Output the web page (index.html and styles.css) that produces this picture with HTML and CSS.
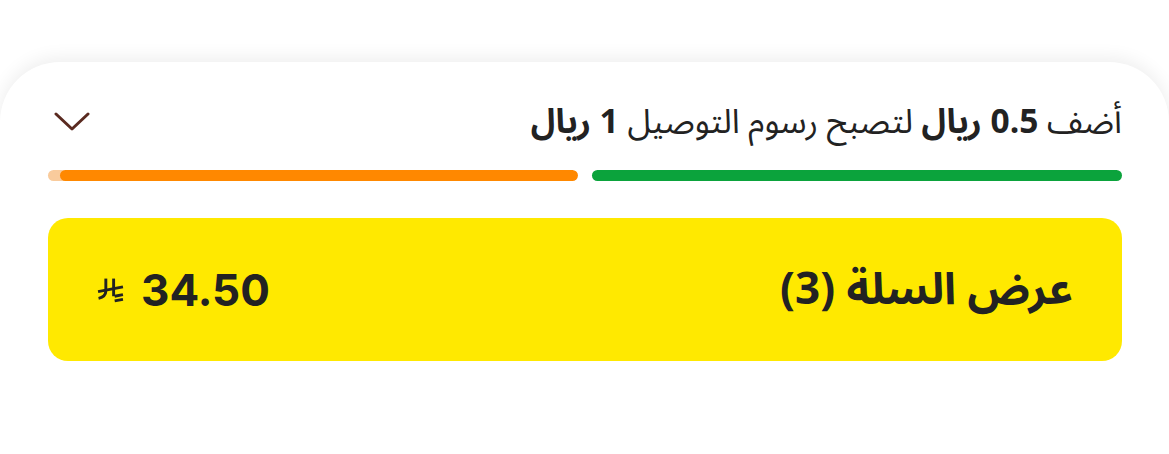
FILE: index.html
```html
<!DOCTYPE html>
<html lang="ar" dir="rtl">
<head>
  <meta charset="UTF-8" />
  <meta name="viewport" content="width=device-width, initial-scale=1.0"/>
  <title>السلة</title>
  <link rel="stylesheet" href="styles.css">
</head>
<body>
  <div class="cart-sheet">
    <!-- delivery fee hint -->
    <div class="fee-row">
      <p class="fee-text">أضف <b>0.5 ريال</b> لتصبح رسوم التوصيل <b>1 ريال</b></p>
      <button class="toggle-btn" title="إخفاء">
        <svg width="36" height="20" viewBox="0 0 36 20">
          <path d="M2 2 L18 17 L34 2" fill="none" stroke="#5a2a20" stroke-width="3" stroke-linecap="round" stroke-linejoin="round"/>
        </svg>
      </button>
    </div>

    <div class="progress">
      <div class="bar bar-done"></div>
      <div class="bar bar-current">
        <div class="bar-fill" style="width: 97.7%"></div>
      </div>
    </div>

    <!-- view cart -->
    <button class="cart-btn">
      <span class="cart-label">عرض السلة (3)</span>
      <span class="cart-price">
        <span class="price-num">34.50</span>
        <svg class="riyal" width="27" height="26" viewBox="0 0 26 24">
          <g fill="none" stroke="#222" stroke-width="2.8" stroke-linecap="butt">
            <path d="M8.5 1 V13"/>
            <path d="M16 1 V18"/>
            <path d="M8.5 13 C8.5 17 6 19 1.5 20"/>
            <path d="M1 13.5 L25 9"/>
            <path d="M17 18 L25 16.5"/>
            <path d="M17 22.5 L25 21"/>
          </g>
        </svg>
      </span>
    </button>
  </div>
</body>
</html>
```

FILE: styles.css
```css
/* ===== Base ===== */
* {
  margin: 0;
  padding: 0;
  box-sizing: border-box;
}
html, body {
  height: 100%;
  background: #fff;
  font-family: 'Noto Sans Arabic', 'DejaVu Sans', 'Noto Sans', sans-serif;
  color: #222;
}
body {
  padding-top: 62px;
  overflow: hidden;
}

/* ===== Sheet ===== */
.cart-sheet {
  height: 100%;
  background: #fff;
  border-radius: 60px 60px 0 0;
  box-shadow: 0 -4px 18px rgba(0,0,0,0.07);
  padding: 32px 47px 0 48px;
}
.fee-row {
  display: flex;
  justify-content: space-between;
  align-items: center;
  height: 56px;
}
.fee-text {
  font-size: 33.5px;
  font-weight: 400;
  white-space: nowrap;
}
.fee-text b {
  font-weight: 700;
}
.toggle-btn {
  background: none;
  border: none;
  margin-left: 6px;
  display: flex;
}

/* ===== Progress ===== */
.progress {
  display: flex;
  gap: 14px;
  margin-top: 20px;
}
.bar {
  flex: 1;
  height: 11px;
  border-radius: 6px;
  overflow: hidden;
}
.bar-done {
  background: #0ba33c;
}
.bar-current {
  background: #f9cb9c;
}
.bar-fill {
  height: 100%;
  background: #ff8800;
  border-radius: 6px;
}

/* ===== Cart button ===== */
.cart-btn {
  width: 100%;
  height: 143px;
  margin-top: 37px;
  background: #ffe900;
  border: none;
  border-radius: 20px;
  display: flex;
  justify-content: space-between;
  align-items: center;
  padding: 0 49px;
  font-family: inherit;
  color: #222;
}
.cart-label {
  font-size: 44px;
  font-weight: 700;
}
.cart-price {
  display: flex;
  align-items: center;
  gap: 17px;
}
.price-num {
  font-family: 'Inter', 'Roboto', sans-serif;
  font-size: 44px;
  font-weight: 700;
}
.riyal {
  display: block;
}
```
